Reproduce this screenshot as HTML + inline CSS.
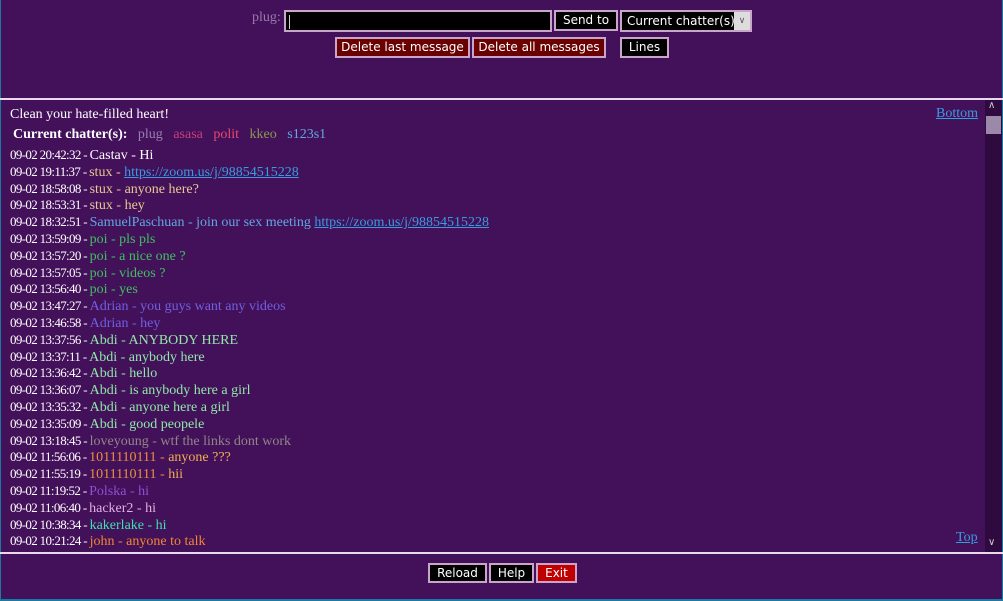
<!DOCTYPE html>
<html><head><meta charset="utf-8"><style>
*{margin:0;padding:0;box-sizing:border-box}
html,body{width:1003px;height:601px;overflow:hidden;background:#43105a;font-family:"Liberation Serif",serif;color:#fff}
.abs{position:absolute}
.btn{position:absolute;font-family:"DejaVu Sans","Liberation Sans",sans-serif;font-size:12px;color:#fff;border:2px solid #c9a6c9;text-align:center;line-height:15px}
.log{position:absolute;left:10px;top:147px;font-size:14px;white-space:nowrap}
.log div{height:16.8px;line-height:16.8px;overflow:visible}
.t{font-size:13px;letter-spacing:-0.65px;color:#fff}
a{color:#3a9ce0;text-decoration:underline}
</style></head><body>
<div class="abs" style="left:0;top:0;width:1003px;height:601px;border-left:1px solid #1a7aa0;border-right:1px solid #1a7aa0;border-bottom:2px solid #1a7aa0"></div>
<div class="abs" style="left:252px;top:10px;font-size:14px;color:#9a7aa8">plug:</div>
<div class="abs" style="left:284px;top:10px;width:268px;height:22px;background:#000;border:2px solid #c9a6c9"><div style="position:absolute;left:3px;top:3px;width:1px;height:14px;background:#ccc"></div></div>
<div class="btn" style="left:554px;top:10px;width:64px;height:21px;background:#000;line-height:17px">Send to</div>
<div class="btn" style="left:620px;top:10px;width:132px;height:22px;background:#000;line-height:18px;text-align:left;padding-left:5px">Current chatter(s)<span style="position:absolute;right:0;top:0;width:16px;height:18px;background:#ddd;color:#555;font-size:9px;text-align:center">&#8744;</span></div>
<div class="btn" style="left:335px;top:37px;width:135px;height:21px;background:#6a0000;line-height:17px">Delete last message</div>
<div class="btn" style="left:472px;top:37px;width:134px;height:21px;background:#6a0000;line-height:17px">Delete all messages</div>
<div class="btn" style="left:620px;top:37px;width:49px;height:21px;background:#000;line-height:17px">Lines</div>
<div class="abs" style="left:0;top:98px;width:1003px;height:2px;background:#e8d8f0"></div>
<div class="abs" style="left:10px;top:107px;font-size:14px">Clean your hate-filled heart!</div>
<div class="abs" style="left:13px;top:127px;font-size:14px;white-space:nowrap"><b>Current chatter(s):</b>&nbsp;&nbsp; <span style="color:#9a80b0">plug</span>&nbsp;&nbsp; <span style="color:#c8407a">asasa</span>&nbsp;&nbsp; <span style="color:#e84a70">polit</span>&nbsp;&nbsp; <span style="color:#8a9a50">kkeo</span>&nbsp;&nbsp; <span style="color:#60a8e0">s123s1</span></div>
<a class="abs" style="left:936px;top:106px;font-size:14px">Bottom</a>
<a class="abs" style="left:956px;top:530px;font-size:14px">Top</a>
<div class="abs" style="left:985px;top:100px;width:17px;height:452px;background:#2e0a3f"></div>
<div class="abs" style="left:986px;top:116px;width:15px;height:18px;background:#9c88a8"></div>
<div class="abs" style="left:988px;top:100px;font-size:10px;color:#ccc">&#8743;</div>
<div class="abs" style="left:988px;top:537px;font-size:10px;color:#ccc">&#8744;</div>
<div class="log">
<div><span class="t">09-02 20:42:32 - </span><span style="color:#fff">Castav - Hi</span></div>
<div><span class="t">09-02 19:11:37 - </span><span style="color:#e8c890">stux - </span><a>https://zoom.us/j/98854515228</a></div>
<div><span class="t">09-02 18:58:08 - </span><span style="color:#e8c890">stux - anyone here?</span></div>
<div><span class="t">09-02 18:53:31 - </span><span style="color:#e8c890">stux - hey</span></div>
<div><span class="t">09-02 18:32:51 - </span><span style="color:#60a8e0">SamuelPaschuan - join our sex meeting </span><a>https://zoom.us/j/98854515228</a></div>
<div><span class="t">09-02 13:59:09 - </span><span style="color:#40c060">poi - pls pls</span></div>
<div><span class="t">09-02 13:57:20 - </span><span style="color:#40c060">poi - a nice one ?</span></div>
<div><span class="t">09-02 13:57:05 - </span><span style="color:#40c060">poi - videos ?</span></div>
<div><span class="t">09-02 13:56:40 - </span><span style="color:#40c060">poi - yes</span></div>
<div><span class="t">09-02 13:47:27 - </span><span style="color:#7060e0">Adrian - you guys want any videos</span></div>
<div><span class="t">09-02 13:46:58 - </span><span style="color:#7060e0">Adrian - hey</span></div>
<div><span class="t">09-02 13:37:56 - </span><span style="color:#90e8a8">Abdi - ANYBODY HERE</span></div>
<div><span class="t">09-02 13:37:11 - </span><span style="color:#90e8a8">Abdi - anybody here</span></div>
<div><span class="t">09-02 13:36:42 - </span><span style="color:#90e8a8">Abdi - hello</span></div>
<div><span class="t">09-02 13:36:07 - </span><span style="color:#90e8a8">Abdi - is anybody here a girl</span></div>
<div><span class="t">09-02 13:35:32 - </span><span style="color:#90e8a8">Abdi - anyone here a girl</span></div>
<div><span class="t">09-02 13:35:09 - </span><span style="color:#90e8a8">Abdi - good peopele</span></div>
<div><span class="t">09-02 13:18:45 - </span><span style="color:#908888">loveyoung - wtf the links dont work</span></div>
<div><span class="t">09-02 11:56:06 - </span><span style="color:#e89040">1011110111 - </span><span style="color:#f0b050">anyone ???</span></div>
<div><span class="t">09-02 11:55:19 - </span><span style="color:#e89040">1011110111 - </span><span style="color:#f0b050">hii</span></div>
<div><span class="t">09-02 11:19:52 - </span><span style="color:#9050d0">Polska - hi</span></div>
<div><span class="t">09-02 11:06:40 - </span><span style="color:#e0b0e0">hacker2 - hi</span></div>
<div><span class="t">09-02 10:38:34 - </span><span style="color:#40e0b0">kakerlake - hi</span></div>
<div><span class="t">09-02 10:21:24 - </span><span style="color:#f08830">john - anyone to talk</span></div>
</div>
<div class="abs" style="left:0;top:552px;width:1003px;height:2px;background:#e8d8f0"></div>
<div class="btn" style="left:428px;top:563px;width:59px;height:20px;background:#000;line-height:16px">Reload</div>
<div class="btn" style="left:489px;top:563px;width:45px;height:20px;background:#000;line-height:16px">Help</div>
<div class="btn" style="left:536px;top:563px;width:41px;height:20px;background:#c00000;line-height:16px">Exit</div>
</body></html>
